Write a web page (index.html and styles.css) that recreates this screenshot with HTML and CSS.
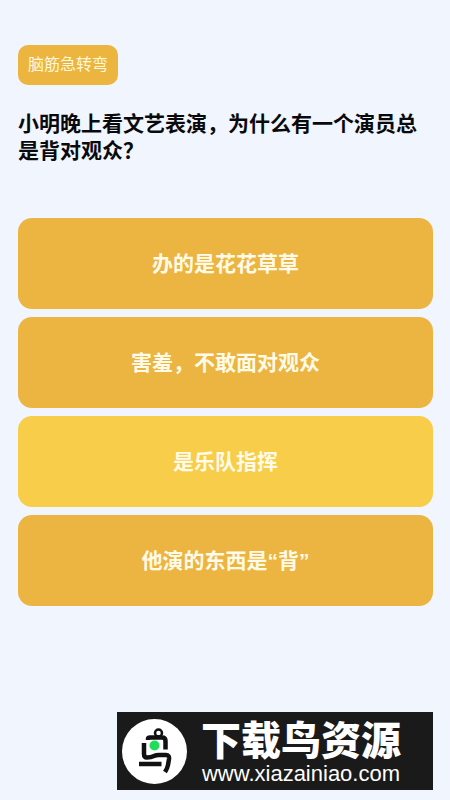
FILE: index.html
```
<!DOCTYPE html>
<html lang="zh-CN">
<head>
    <meta charset="UTF-8">
    <meta name="viewport" content="width=device-width, initial-scale=1.0">
    <title>脑筋急转弯</title>
    <link rel="stylesheet" href="styles.css">
</head>
<body>
    <main class="quiz">
        <span class="tag">脑筋急转弯</span>
        <h1 class="question">小明晚上看文艺表演，为什么有一个演员总是背对观众？</h1>

        <div class="options">
            <button class="option" type="button">办的是花花草草</button>
            <button class="option" type="button">害羞，不敢面对观众</button>
            <button class="option selected" type="button">是乐队指挥</button>
            <button class="option" type="button">他演的东西是“背”</button>
        </div>
    </main>

    <footer class="banner">
        <svg class="logo" viewBox="0 0 65 65" aria-hidden="true">
            <circle cx="32.5" cy="32.5" r="32.5" fill="#fff"/>
            <g fill="none" stroke="#111" stroke-width="4.5">
                <circle cx="36.5" cy="14" r="3.5" stroke-width="2.5"/>
                <path d="M26 21V20Q26 18.500 28 18.500H40Q43.500 18.500 43.500 22V30.500"/>
                <path d="M22 24V35Q22 38.500 25 38.500Q29 38.500 32 37Q34 36 37 36H44Q47.500 36 47 40L46 46Q45.500 49 43 53"/>
                <path d="M17 45H39.500"/>
            </g>
            <circle cx="32.5" cy="26.5" r="5" fill="#1fdc5a"/>
        </svg>
        <div class="banner-text">
            <div class="banner-name">下载鸟资源</div>
            <div class="banner-url">www.xiazainiao.com</div>
        </div>
    </footer>
</body>
</html>
```
FILE: styles.css
```
* {
    box-sizing: border-box;
}

body {
    margin: 0;
    padding: 45px 17px 10px 18px;
    display: flex;
    flex-direction: column;
    min-height: 100vh;
    background: #f0f5fe;
    color: #0a0a0c;
    font-family: "Liberation Sans", "Noto Sans CJK SC", sans-serif;
}

.quiz {
    display: flex;
    flex-direction: column;
    align-items: flex-start;
}

.tag {
    padding: 8px 10px;
    border-radius: 10px;
    background: #ecb53f;
    color: #fff8dc;
    font-size: 16px;
    line-height: 24px;
}

.question {
    margin: 25px 0 54px;
    font-size: 21px;
    font-weight: bold;
    line-height: 27px;
}

.options {
    display: flex;
    flex-direction: column;
    gap: 8px;
    width: 100%;
}

.option {
    padding: 32px 16px;
    border: none;
    border-radius: 14px;
    background: #ecb440;
    color: #fffbe8;
    font-family: inherit;
    font-size: 21px;
    font-weight: bold;
    line-height: 27px;
    cursor: pointer;
}

.option.selected {
    background: #f7cd49;
}

.banner {
    display: flex;
    align-items: center;
    align-self: flex-end;
    gap: 14px;
    margin-top: auto;
    padding: 4px 32px 4px 5px;
    background: #1a1a1a;
    color: #fff;
}

.logo {
    width: 65px;
    height: 65px;
}

.banner-text {
    padding-top: 4px;
    text-align: center;
}

.banner-name {
    font-size: 40px;
    font-weight: 900;
    line-height: 42px;
}

.banner-url {
    font-family: "Liberation Sans", Arial, sans-serif;
    font-size: 22px;
    line-height: 24px;
}
```
